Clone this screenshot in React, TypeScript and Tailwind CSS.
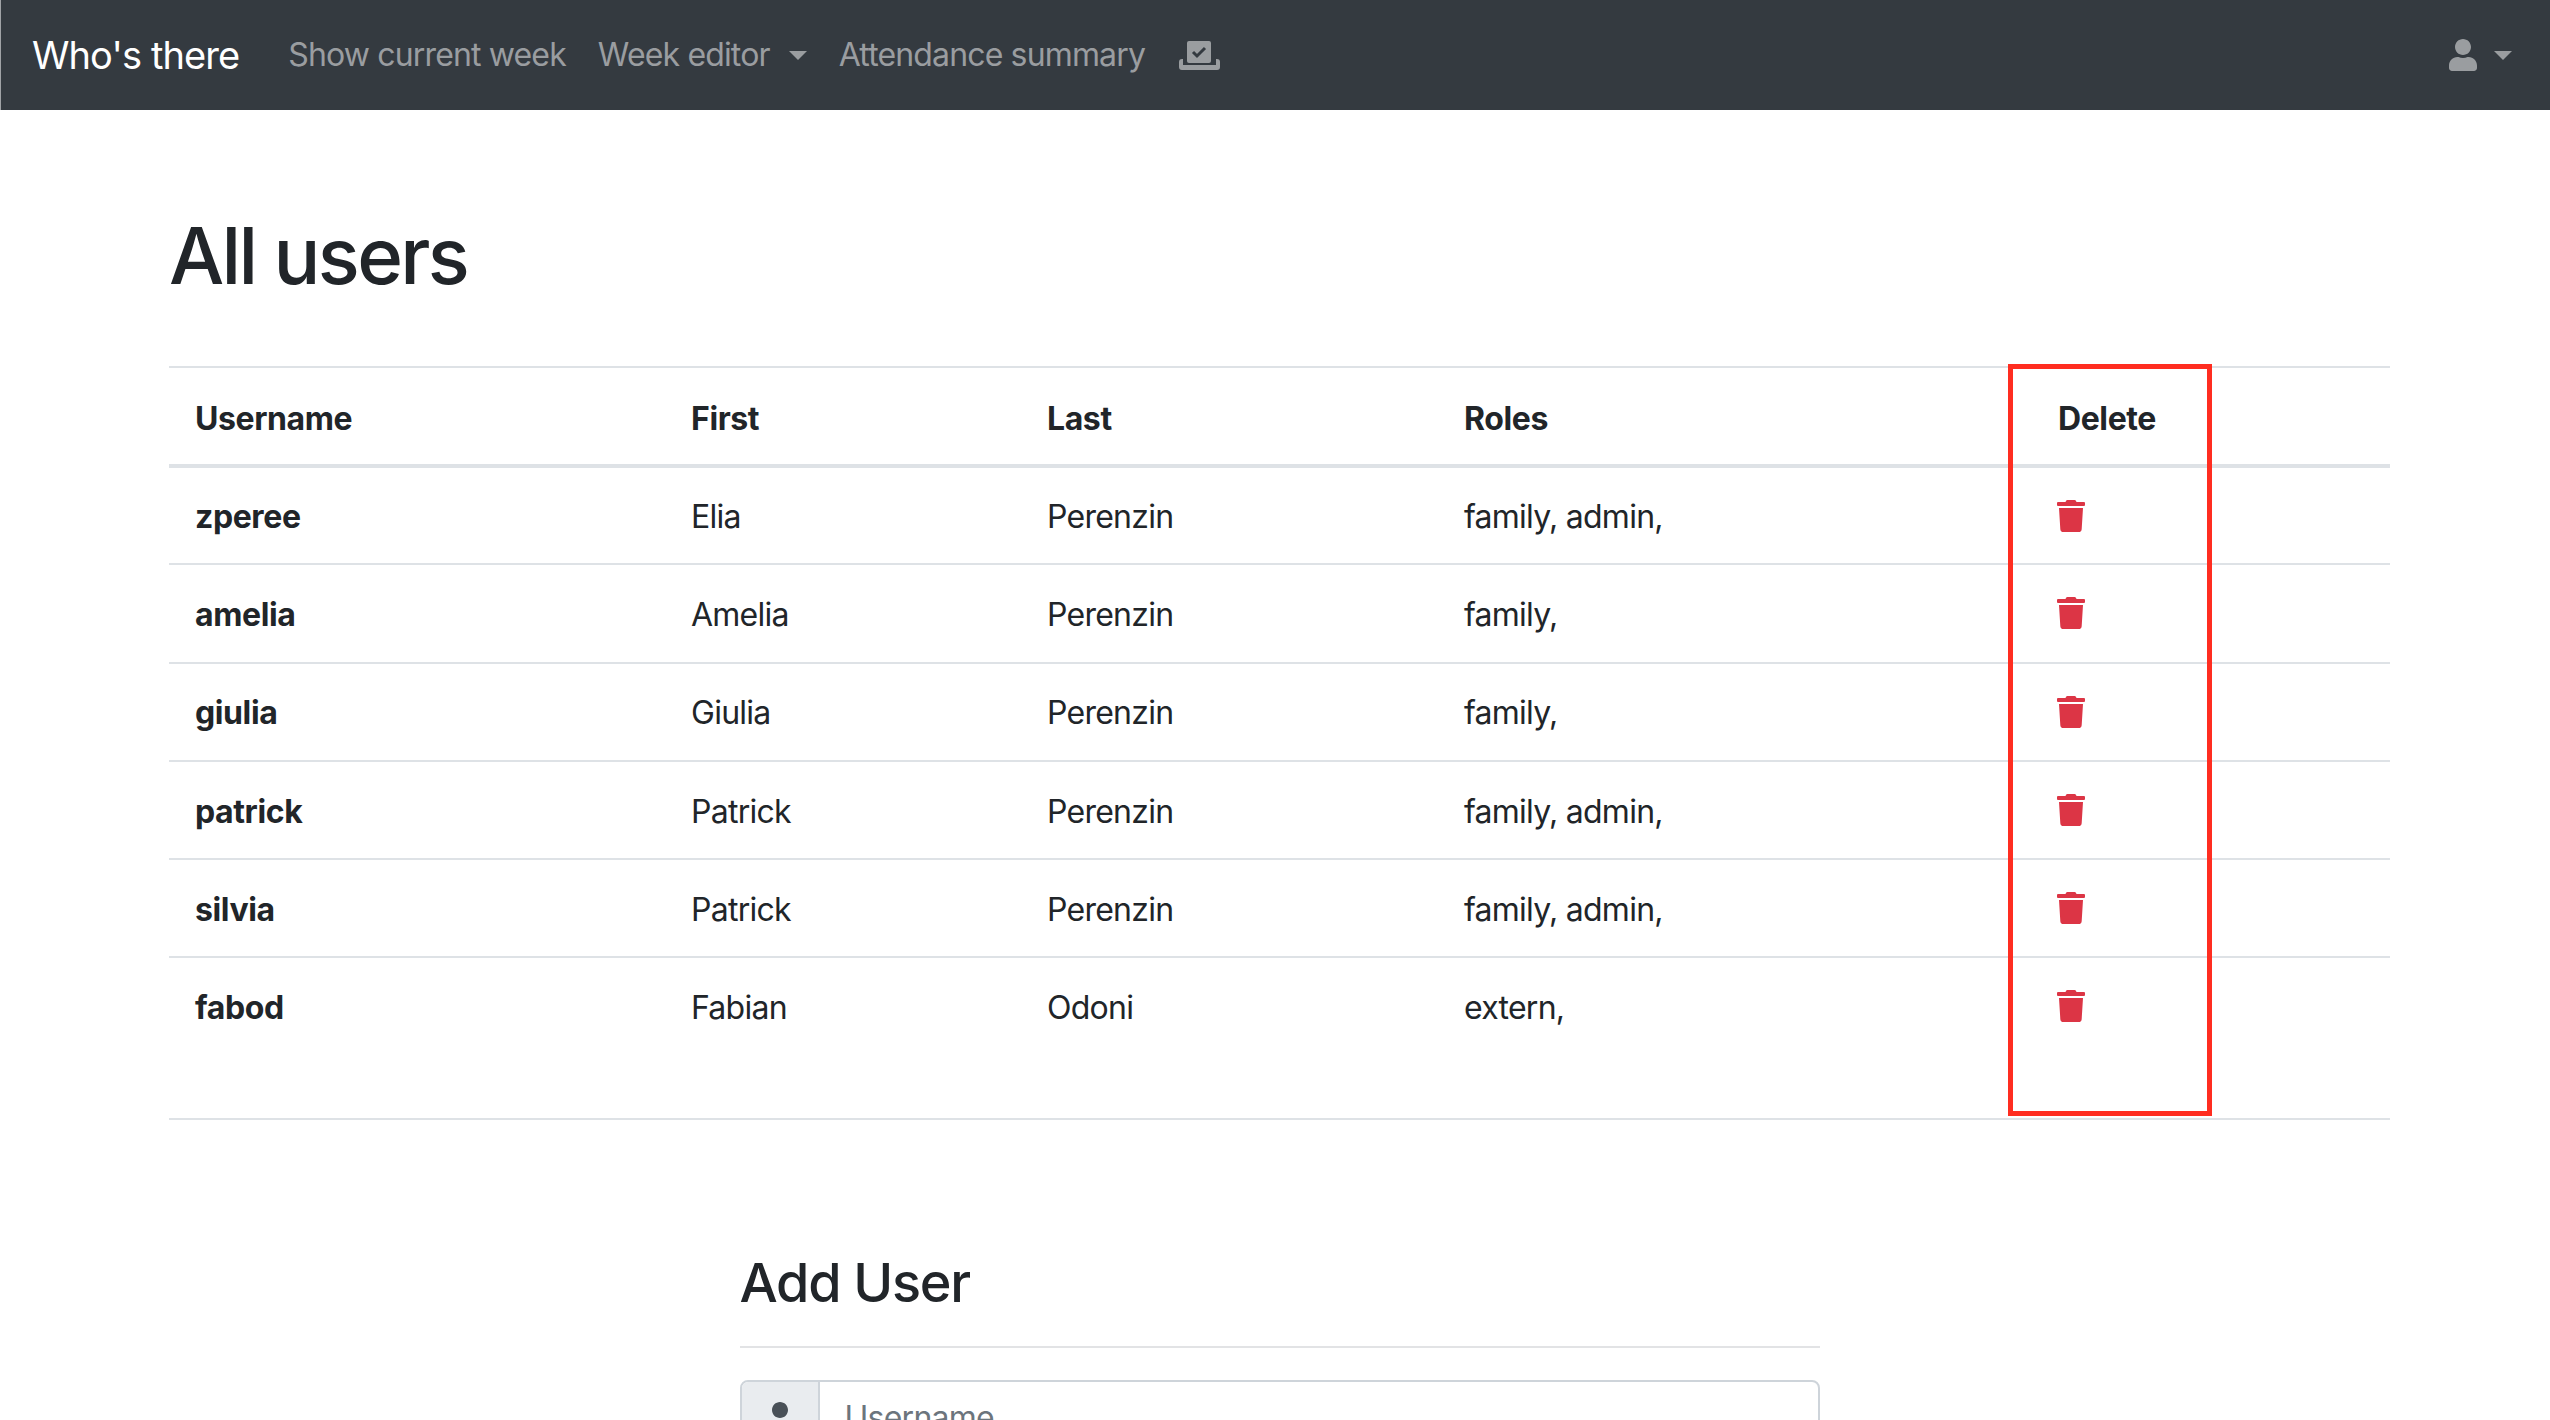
import { FaTrash, FaUser } from "react-icons/fa";

const users = [
  { username: "zperee", first: "Elia", last: "Perenzin", roles: "family, admin," },
  { username: "amelia", first: "Amelia", last: "Perenzin", roles: "family," },
  { username: "giulia", first: "Giulia", last: "Perenzin", roles: "family," },
  { username: "patrick", first: "Patrick", last: "Perenzin", roles: "family, admin," },
  { username: "silvia", first: "Patrick", last: "Perenzin", roles: "family, admin," },
  { username: "fabod", first: "Fabian", last: "Odoni", roles: "extern," },
];

function Caret() {
  return (
    <svg viewBox="0 0 18 9" className="h-[9px] w-[18px] fill-current">
      <polygon points="0,0 18,0 9,9" />
    </svg>
  );
}

function BallotIcon() {
  return (
    <svg viewBox="0 0 41 29" className="ml-[2px] h-[29px] w-[41px] fill-current">
      <rect x="8" y="0" width="24" height="22" rx="2" />
      <path d="M14 11l4 4 8-8" fill="none" stroke="#343a40" strokeWidth="3" />
      <path d="M0 21a3 3 0 0 1 3-3h1v6h33v-6h1a3 3 0 0 1 3 3v5a3 3 0 0 1-3 3H3a3 3 0 0 1-3-3z" />
    </svg>
  );
}

function Navbar() {
  return (
    <nav className="flex h-[110px] items-center border-l border-[#a0a3a6] bg-[#343a40] pl-[31px] pr-[38px]">
      <span className="text-[38px] tracking-[-0.9px] text-white">Who's there</span>
      <div className="ml-[49px] flex items-center gap-[32px] text-[32px] tracking-[-0.85px] text-[#9a9da0]">
        <span>Show current week</span>
        <span className="flex items-center gap-[19px]">
          Week editor
          <Caret />
        </span>
        <span>Attendance summary</span>
        <BallotIcon />
      </div>
      <div className="ml-auto flex items-center gap-[17px] text-[#9a9da0]">
        <FaUser className="h-[32px] w-[28px]" />
        <Caret />
      </div>
    </nav>
  );
}

export default function App() {
  return (
    <div className="relative h-screen overflow-hidden bg-white font-['Inter',sans-serif] text-[#212529]">
      <Navbar />
      <main className="pt-[98px] pr-[160px] pl-[169px]">
        <h1 className="text-[78px] leading-[96px] font-medium tracking-[-2.7px]">All users</h1>
        <table className="mt-[62px] w-full table-fixed border-y-2 border-[#dee2e6] text-[32px] leading-[48px] tracking-[-0.75px]">
          <colgroup>
            <col className="w-[496px]" />
            <col className="w-[356px]" />
            <col className="w-[417px]" />
            <col className="w-[594px]" />
            <col />
          </colgroup>
          <thead>
            <tr className="h-[99px] border-b-4 border-[#dee2e6] text-left font-bold tracking-[-0.4px]">
              <th className="px-[26px] pt-[5px]">Username</th>
              <th className="px-[26px] pt-[5px]">First</th>
              <th className="px-[26px] pt-[5px]">Last</th>
              <th className="px-[26px] pt-[5px]">Roles</th>
              <th className="px-[26px] pt-[5px]">Delete</th>
            </tr>
          </thead>
          <tbody>
            {users.map((user, i) => (
              <tr key={user.username} className={i < 5 ? "border-b-2 border-[#dee2e6]" : ""}>
                <td className={`px-[26px] font-bold tracking-[-0.4px] ${i < 5 ? "h-[98.3px] pt-[3px]" : "h-[162px] pb-[61px]"}`}>
                  {user.username}
                </td>
                <td className={`px-[26px] ${i < 5 ? "pt-[3px]" : "pb-[61px]"}`}>{user.first}</td>
                <td className={`px-[26px] ${i < 5 ? "pt-[3px]" : "pb-[61px]"}`}>{user.last}</td>
                <td className={`px-[26px] ${i < 5 ? "pt-[3px]" : "pb-[61px]"}`}>{user.roles}</td>
                <td className={`pr-[26px] pl-[25px] text-[#dc3545] ${i === 5 ? "pb-[64px]" : ""}`}>
                  <FaTrash className="h-[32px] w-[28px]" />
                </td>
              </tr>
            ))}
          </tbody>
        </table>

        <section className="mx-auto mt-[129px] w-[1080px]">
          <h2 className="text-[54px] leading-[67px] font-medium tracking-[-1.3px]">Add User</h2>
          <hr className="mt-[30px] border-t-2 border-[#e2e3e5]" />
          <div className="mt-[32px] flex h-[76px] rounded-[8px] border-2 border-[#ced4da]">
            <div className="flex w-[78px] items-center justify-center rounded-l-[6px] border-r-2 border-[#ced4da] bg-[#e9ecef] text-[#495057]">
              <FaUser className="h-[32px] w-[28px]" />
            </div>
            <div className="flex items-center pl-[25px] text-[32px] tracking-[-0.75px] text-[#6c757d]">Username</div>
          </div>
        </section>
      </main>
      {/* red annotation box drawn on top of the screenshot */}
      <div className="absolute top-[364px] left-[2008px] h-[752px] w-[204px] border-[5px] border-[#ff2d20]" />
    </div>
  );
}
